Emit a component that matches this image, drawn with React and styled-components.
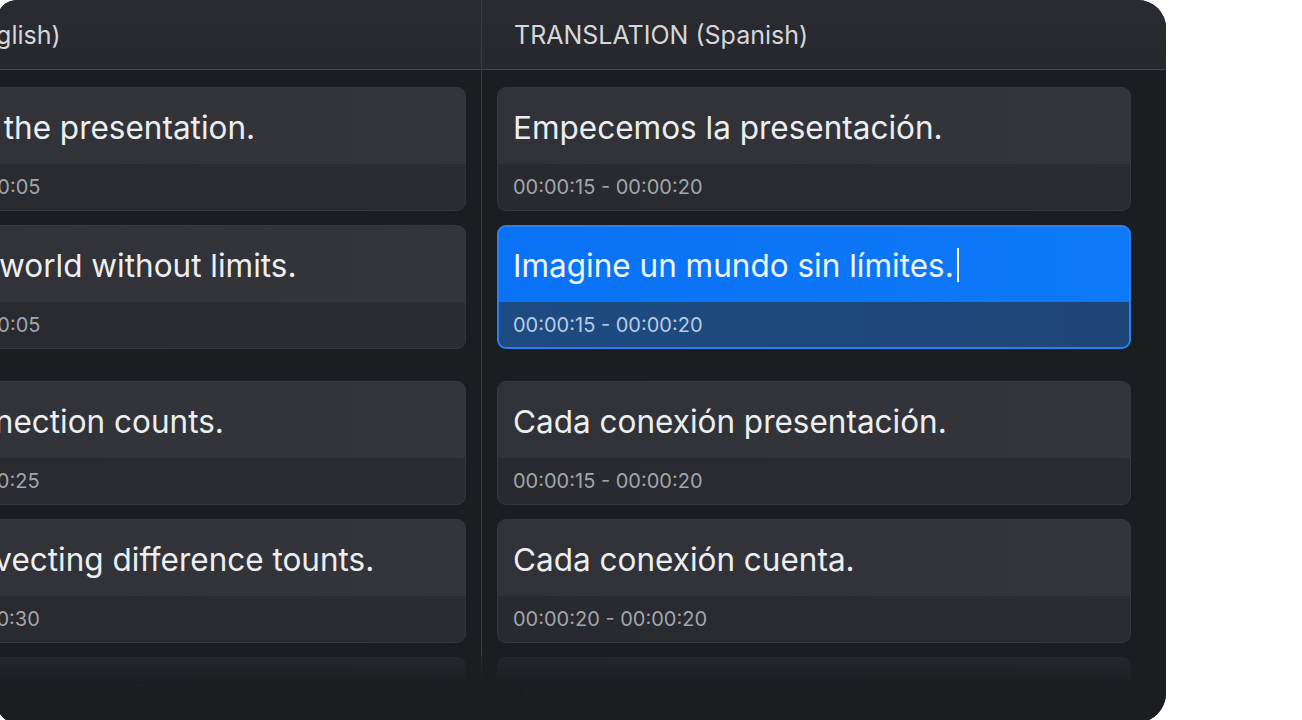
import React from 'react'
import styled, { createGlobalStyle } from 'styled-components'

const GlobalStyle = createGlobalStyle`
  html, body {
    margin: 0;
    padding: 0;
    background: #ffffff;
    overflow: hidden;
  }
  body {
    font-family: Inter, "Noto Sans", "Liberation Sans", sans-serif;
    -webkit-font-smoothing: antialiased;
  }
`

const source = [
  { text: "Let's start the presentation.", time: '00:00:00 - 00:00:05' },
  { text: 'Imagine a world without limits.', time: '00:00:00 - 00:00:05' },
  { text: 'Every connection counts.', time: '00:00:20 - 00:00:25', spaced: true },
  { text: 'Every convecting difference tounts.', time: '00:00:25 - 00:00:30' },
  { text: 'Together we move forward.', time: '00:00:30 - 00:00:35' },
]

const translation = [
  { text: 'Empecemos la presentación.', time: '00:00:15 - 00:00:20' },
  { text: 'Imagine un mundo sin límites.', time: '00:00:15 - 00:00:20', active: true },
  { text: 'Cada conexión presentación.', time: '00:00:15 - 00:00:20', spaced: true },
  { text: 'Cada conexión cuenta.', time: '00:00:20 - 00:00:20' },
  { text: 'Juntos avanzamos hacia adelante.', time: '00:00:20 - 00:00:25' },
]

const Column = ({ title, items, wide }) => (
  <Col>
    <Header>{title}</Header>
    <List $wide={wide}>
      {items.map((item, i) => (
        <Card key={i} $active={item.active} $spaced={item.spaced}>
          <CardText $active={item.active}>
            {item.text}
            {item.active && <Caret />}
          </CardText>
          <CardTime $active={item.active}>{item.time}</CardTime>
        </Card>
      ))}
    </List>
  </Col>
)

const App = () => {
  return (
    <>
      <GlobalStyle />
      <Page>
        <Panel>
          <Board>
            <Column title="SOURCE (English)" items={source} />
            <Column title="TRANSLATION (Spanish)" items={translation} wide />
          </Board>
          <Fade />
        </Panel>
      </Page>
    </>
  )
}

export default App

const Page = styled.div`
  width: 1302px;
  height: 720px;
  overflow: hidden;
  background: #ffffff;
`

// the visible window onto the editor, scrolled sideways
const Panel = styled.div`
  position: relative;
  margin-left: -3px;
  width: 1169px;
  height: 723px;
  border-radius: 20px 28px 30px 20px;
  overflow: hidden;
  background: #1b1d21;
`

const Board = styled.div`
  margin-left: -182px;
  width: 1351px;
  height: 100%;
  display: grid;
  grid-template-columns: 667px 1fr;
`

const Col = styled.div`
  display: flex;
  flex-direction: column;
  min-width: 0;
  &:first-child {
    border-right: 1px solid #3b3e43;
  }
`

const Header = styled.div`
  height: 70px;
  flex: none;
  box-sizing: border-box;
  display: flex;
  align-items: center;
  padding-left: 32px;
  background: linear-gradient(180deg, #2a2c31 0%, #26282d 100%);
  border-bottom: 1px solid #44474c;
  color: #d4d6da;
  font-size: 25px;
  font-weight: 400;
`

const List = styled.div`
  display: flex;
  flex-direction: column;
  gap: 14px;
  padding: 17px ${(p) => (p.$wide ? '35px' : '15px')} 0 15px;
`

const Card = styled.div`
  display: flex;
  flex-direction: column;
  height: 124px;
  flex: none;
  box-sizing: border-box;
  border-radius: 9px;
  overflow: hidden;
  margin-top: ${(p) => (p.$spaced ? '18px' : '0')};
  border: ${(p) => (p.$active ? '2px solid #2c7ff0' : '1px solid #35373c')};
  background: ${(p) => (p.$active ? '#0b74f6' : '#303237')};
`

const CardText = styled.div`
  height: 76px;
  flex: none;
  box-sizing: border-box;
  display: flex;
  align-items: center;
  padding: 2px ${(p) => (p.$active ? '14px' : '15px')} 0;
  margin-top: ${(p) => (p.$active ? '-1px' : '0')};
  color: ${(p) => (p.$active ? '#eef5ff' : '#eceef0')};
  font-size: 31.5px;
  white-space: nowrap;
  background: ${(p) =>
    p.$active ? 'linear-gradient(90deg, #0a73f5, #0d78f8)' : 'linear-gradient(90deg, #303237, #33353a)'};
`

const Caret = styled.span`
  display: inline-block;
  width: 2px;
  height: 34px;
  margin-left: 3px;
  background: #ffffff;
`

const CardTime = styled.div`
  flex: 1;
  display: flex;
  align-items: center;
  padding: 0 ${(p) => (p.$active ? '14px' : '15px')};
  color: ${(p) => (p.$active ? '#b9cbe3' : '#a2a5aa')};
  font-size: 20px;
  background: ${(p) =>
    p.$active ? 'linear-gradient(90deg, #1d4c82, #1e4577)' : 'linear-gradient(90deg, #282a2f, #2a2c32)'};
`

const Fade = styled.div`
  position: absolute;
  left: 0;
  right: 0;
  bottom: 0;
  height: 68px;
  pointer-events: none;
  background: linear-gradient(
    180deg,
    rgba(27, 29, 33, 0.55) 0%,
    rgba(27, 29, 33, 0.985) 42%,
    #1b1d21 60%,
    #1b1d21 100%
  );
`
